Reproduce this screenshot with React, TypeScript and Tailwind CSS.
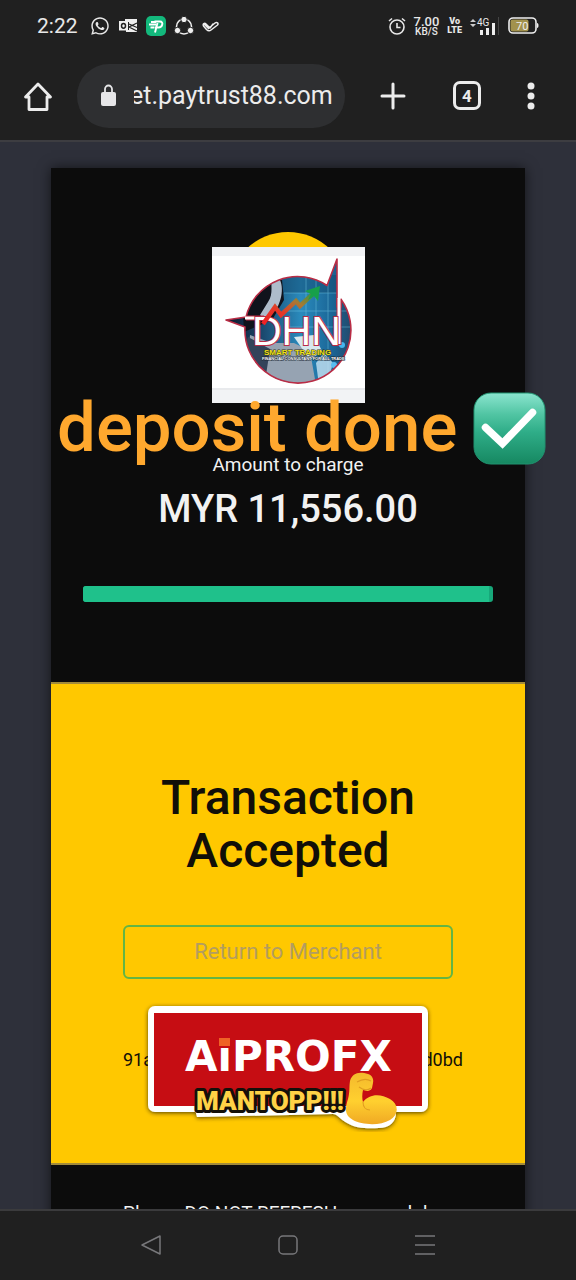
import React from "react";
import { FaWhatsapp } from "react-icons/fa";

function StatusBar() {
  return (
    <div className="flex h-[51px] shrink-0 items-center justify-between pr-[37px] pl-[37px] text-[#e8e8e8]">
      <div className="flex items-center gap-2">
        <span className="mr-1 text-[21px] leading-6">2:22</span>
        <FaWhatsapp className="size-5" />
        <svg className="size-5" viewBox="0 0 20 20" aria-hidden="true">
          <path d="M7 3h12v13H8v-2h3V6H7z" fill="#eee" />
          <path d="M11 8l8 3.500M19 7l-8 4 8 4" stroke="#202020" strokeWidth="1.200" fill="none" />
          <rect x="1" y="5" width="9" height="9.500" fill="#eee" />
          <ellipse cx="5.500" cy="9.800" rx="2" ry="2.400" fill="none" stroke="#202020" strokeWidth="1.500" />
        </svg>
        <svg className="size-5" viewBox="0 0 20 20" aria-hidden="true">
          <rect width="20" height="20" rx="5" fill="#13b87c" />
          <path d="M9 16.500L11.500 7M8.500 5.500H14c4 0 2.500 6-1.500 6H9M3 8.500h7M4.500 11.500h4M5 6h5" stroke="#fff" strokeWidth="1.900" fill="none" />
        </svg>
        <svg className="size-5" viewBox="0 0 20 20" aria-hidden="true">
          <circle cx="10" cy="10.500" r="7.500" fill="none" stroke="#eee" strokeWidth="1.600" />
          <g fill="#eee" stroke="#202020" strokeWidth="1">
            <circle cx="10" cy="3.500" r="3.200" />
            <circle cx="3.500" cy="14.500" r="3.200" />
            <circle cx="16.500" cy="14.500" r="3.200" />
          </g>
        </svg>
        <svg className="h-5 w-[18px]" viewBox="0 0 18 20" aria-hidden="true">
          <path d="M2.500 8.500l4 4L13 7c2-1.500 4 .5 2.500 2L9 14c-1.500 1.200-3 1-4.500-.5L1.500 10c-1-2 1-3.500 2.500-2l4 4 3-4" fill="none" stroke="#eee" strokeWidth="1.500" strokeLinecap="round" strokeLinejoin="round" />
        </svg>
      </div>
      <div className="flex items-center gap-2">
        <svg className="size-[18px]" viewBox="0 0 18 18" fill="none" stroke="#e8e8e8" strokeWidth="1.600" aria-hidden="true">
          <circle cx="9" cy="10" r="7" />
          <path d="M9 6v4.500h3.500M1 4l3-2.500M17 4l-3-2.500" />
        </svg>
        <div className="flex flex-col items-center font-medium">
          <span className="text-[13px] leading-[11px]">7.00</span>
          <span className="text-[10px] leading-[9px]">KB/S</span>
        </div>
        <div className="flex flex-col items-center text-[9px] leading-[9px] font-black">
          <span>Vo</span>
          <span>LTE</span>
        </div>
        <svg className="h-5 w-[30px]" viewBox="0 0 30 20" aria-hidden="true">
          <path d="M0 6l3-3 3 3zM0 8l3 3 3-3z" fill="#ccc" />
          <text x="7" y="10" fontSize="10" fill="#e8e8e8">4G</text>
          <path d="M10 14h3v5h-3zM16 12h3v7h-3zM22 7h3v12h-3z" fill="#eee" />
          <path d="M28.500 1v18" stroke="#444" />
        </svg>
        <svg className="h-5 w-[31px]" viewBox="0 0 31 20" aria-hidden="true">
          <rect x="1" y="2" width="27" height="15" rx="4" fill="#202020" stroke="#eee" strokeWidth="1.600" />
          <rect x="2.500" y="3.500" width="18" height="12" rx="2" fill="#a2924d" />
          <path d="M29 7c2 0 2 5 0 5z" fill="#eee" />
          <text x="8" y="13.500" fontSize="11" fill="#eee">70</text>
        </svg>
      </div>
    </div>
  );
}

function BrowserBar() {
  return (
    <header className="flex h-[91px] shrink-0 items-center border-b-2 border-[#3d3d41] pr-[29px] pl-[22px] text-[#ececec]">
      <button aria-label="Home" className="size-8">
        <svg className="size-8" viewBox="0 0 32 32" fill="none" stroke="#ececec" strokeWidth="2.800" strokeLinejoin="round" aria-hidden="true">
          <path d="M3.500 17L16 4l12.500 13H25v12.500H7V17z" />
        </svg>
      </button>
      <div className="ml-[23px] flex h-16 min-w-0 flex-1 items-center rounded-full bg-[#2e2f31] pr-2 pl-[23px]">
        <svg className="h-[23px] w-[17px] shrink-0" viewBox="0 0 17 23" aria-hidden="true">
          <rect x="1" y="8" width="15" height="14" rx="2" fill="#e6e6e8" />
          <path d="M5 9V5a3.500 3.500 0 017 0v4" stroke="#e6e6e8" strokeWidth="1.800" fill="none" />
        </svg>
        <input aria-label="Web address" readOnly value="et.paytrust88.com" className="ml-[17px] w-full min-w-0 bg-transparent -indent-[4px] text-[25px] leading-8 outline-none" />
      </div>
      <button aria-label="New tab" className="ml-8 size-8">
        <svg className="size-8" viewBox="0 0 32 32" stroke="#ececec" strokeWidth="3" strokeLinecap="round" aria-hidden="true">
          <path d="M16 4v24M5 16h22" />
        </svg>
      </button>
      <button aria-label="4 open tabs" className="ml-11 flex h-[29px] w-7 items-center justify-center rounded-[7px] border-3 border-[#ececec] text-[17px] leading-5 font-bold">
        4
      </button>
      <button aria-label="More options" className="ml-[34px] size-8">
        <svg className="size-8" viewBox="0 0 32 32" fill="#ececec" aria-hidden="true">
          <circle cx="16" cy="6" r="3.500" />
          <circle cx="16" cy="16" r="3.500" />
          <circle cx="16" cy="26" r="3.500" />
        </svg>
      </button>
    </header>
  );
}

const emblemOutline = "M125 12L115 38.500A53 53 0 0 0 34 70L14 73L33 80A53 53 0 1 0 129 52.200V60H125Z";

function DhnLogo() {
  return (
    <svg className="h-[156px] w-[153px]" viewBox="0 0 153 156" role="img" aria-label="DHN Smart Trading">
      <defs>
        <linearGradient id="globe" x1="0" y1="0" x2="1" y2="0">
          <stop offset="0" stopColor="#0d1627" />
          <stop offset=".3" stopColor="#1a4a70" />
          <stop offset=".6" stopColor="#2a8bbd" />
          <stop offset=".85" stopColor="#1a6596" />
          <stop offset="1" stopColor="#234a6c" />
        </linearGradient>
        <linearGradient id="trend" x1="0" y1="1" x2="1" y2="0">
          <stop offset="0" stopColor="#ef2025" />
          <stop offset=".35" stopColor="#e53827" />
          <stop offset=".65" stopColor="#a87932" />
          <stop offset="1" stopColor="#17a04a" />
        </linearGradient>
        <clipPath id="emblem">
          <path d={emblemOutline} />
        </clipPath>
      </defs>
      <rect width="153" height="156" fill="#f2f3f5" />
      <rect y="9" width="153" height="132" fill="#fff" />
      <path d="M0 142h153" stroke="#dfe1e4" />
      <path d={emblemOutline} fill="url(#globe)" />
      <g clipPath="url(#emblem)">
        <path d="M70 28h70v18H70z" fill="#12496f" opacity=".5" />
        <path d="M30 50l32-24 8 7 2 20-12 20-28 12z" fill="#10131c" />
        <path d="M60 27c12 2 12 20 6 32l-12 14-6-5 8-13c6-9 2-17 4-28z" fill="#aebccb" />
        <path d="M72 46h68M76 64h65M72 80h66M104 30v75M116 30v95M94 30v70" stroke="#7bd0ea" strokeWidth=".7" opacity=".6" />
        <path d="M38 88l22 8 22 0 16 8 6 34H62L36 116z" fill="#96a3b2" />
        <path d="M36 90l22 12-4 26-24-18z" fill="#33435a" />
        <path d="M82 90l20-2 8 16-12 9z" fill="#d6e8ee" />
        <path d="M104 116l8-10 9 10-6 22h-8z" fill="#c7e4f4" opacity=".8" />
        <circle cx="130" cy="98" r="3" fill="#45b4ed" />
        <circle cx="122" cy="118" r="3" fill="#58bdf0" />
      </g>
      <path d={emblemOutline} fill="none" stroke="#b92c45" strokeWidth="1.600" strokeLinejoin="round" />
      <path d="M34 71h18M127 52v46" stroke="#b92c45" strokeWidth="5" />
      <path d="M33 71h20M127 51v46" stroke="#fff" strokeWidth="3" />
      <text x="40" y="98" fontFamily="Liberation Sans" fontSize="41" fill="#fff" stroke="#b92c45" strokeWidth="2" paintOrder="stroke">DHN</text>
      <path d="M51 77l12-17 6 8 15-14 4 5 16-15" fill="none" stroke="url(#trend)" strokeWidth="4.500" />
      <path d="M93 44l15-5-2 15-4-5-6 4 3-6z" fill="#17a04a" />
      <text x="52" y="108" fontFamily="Liberation Sans" fontWeight="700" fontSize="8" fill="#f0e31c" stroke="#343219" strokeWidth="1" paintOrder="stroke">SMART TRADING</text>
      <text x="50" y="113" fontFamily="Liberation Sans" fontWeight="700" fontSize="4" fill="#fff" stroke="#202936" strokeWidth="1" paintOrder="stroke">FINANCIAL CONSULTANT FOR ALL TRADE</text>
    </svg>
  );
}

function CheckMark() {
  return (
    <svg className="h-[73px] w-[73px] shrink-0" viewBox="0 0 73 73" role="img" aria-label="Done">
      <defs>
        <linearGradient id="tile" x1="0" y1="0" x2="0" y2="1">
          <stop offset="0" stopColor="#8be5cf" />
          <stop offset=".3" stopColor="#51c5a3" />
          <stop offset=".55" stopColor="#2fad88" />
          <stop offset="1" stopColor="#168861" />
        </linearGradient>
      </defs>
      <rect x="1" y="1" width="71" height="71" rx="17" fill="url(#tile)" stroke="#209370" />
      <path d="M12.500 35.500l17 16 30-31" fill="none" stroke="#fff" strokeWidth="7.500" strokeLinecap="round" strokeLinejoin="miter" />
    </svg>
  );
}

function Sticker() {
  return (
    <svg className="h-[130px] w-[290px]" viewBox="0 0 290 130" role="img" aria-label="AiPROFX sticker">
      <defs>
        <filter id="shade" x="-10%" y="-10%" width="120%" height="125%">
          <feDropShadow dx="0" dy="1" stdDeviation="2" floodColor="#2a2200" floodOpacity=".8" />
        </filter>
        <linearGradient id="skin" x1="0" y1="0" x2="0" y2="1">
          <stop offset="0" stopColor="#f4b92d" />
          <stop offset=".55" stopColor="#ffd02f" />
          <stop offset="1" stopColor="#f0a924" />
        </linearGradient>
      </defs>
      <g filter="url(#shade)">
        <rect x="5" y="4" width="280" height="106" rx="7" fill="#fff" />
        <path d="M48 92h152l5-17 14-1 8 7v15l20 5 6 10c0 9-7 15-17 15-12 1-24 0-32-5-7-4-10-9-14-9L54 115z" fill="#fff" />
      </g>
      <rect x="11" y="11" width="268" height="93" fill="#c60d13" />
      <text x="42" y="69" fontFamily="DejaVu Sans" fontWeight="700" fontSize="42" fill="#fff">
        AiPROFX
      </text>
      <path d="M76 36h11v8H76z" fill="#ef6225" />
      <text x="53" y="108" fontFamily="Roboto" fontWeight="900" fontSize="26" fill="#ffd246" stroke="#14100a" strokeWidth="6" strokeLinejoin="round" paintOrder="stroke">
        MANTOPP!!!
      </text>
      <path d="M207 79c2-8 9-10 18-7 4 1 6 5 5 9l-1 5c-2 4-6 3-9 2-1 4-1 9 0 12 6-8 17-9 27-3 9 5 9 16 0 21-10 6-28 5-37 0-9-5-8-12-5-21 2-7 1-12 2-18z" fill="url(#skin)" />
      <path d="M214 80c5-3 9-4 14-1M216 85c4 3 8 4 12 1M220 100c0 5 3 8 7 8" fill="none" stroke="#e09d20" strokeWidth="1.100" />
    </svg>
  );
}

function PaymentCard() {
  return (
    <article className="bg-[#0c0c0c] shadow-[0_0_12px_rgba(0,0,0,0.6)]">
      <section className="relative flex h-[514px] flex-col items-center px-8 pt-16 text-[#f2f2f2]">
        <div className="relative flex h-[218px] shrink-0 justify-center">
          <div className="size-[120px] rounded-full bg-[#ffc800]" />
          <div className="absolute top-[15px]">
            <DhnLogo />
          </div>
        </div>
        <p className="text-[19px] leading-[30px]">Amount to charge</p>
        <p className="mt-2 text-[38px] leading-[42px] font-medium">MYR 11,556.00</p>
        <div role="progressbar" aria-label="Payment progress" aria-valuenow={99} className="mt-[56px] h-4 w-full overflow-hidden rounded-[3px] bg-[#17a87a]">
          <div className="h-full w-[99%] bg-[#1fc18b]" />
        </div>
        <div className="absolute top-[220px] left-[6px] flex items-center gap-4 whitespace-nowrap">
          <span className="text-[69px] leading-[80px] font-medium text-[#ffa82e]">deposit done</span>
          <CheckMark />
        </div>
      </section>
      <section className="relative flex h-[483px] flex-col items-center border-y-2 border-[#a28b3b] bg-[#ffc800] px-[72px] pt-[87px] text-[#110f08]">
        <h1 className="text-center text-[48px] leading-[53px] font-medium">
          Transaction
          <br />
          Accepted
        </h1>
        <button className="mt-[48px] h-[54px] w-full shrink-0 rounded-[6px] border-2 border-[#63b545] text-[22px] leading-7 text-[#b39d60]">Return to Merchant</button>
        <p className="mt-[69px] flex w-[340px] justify-between self-start text-[18px] leading-6">
          <span>91a</span>
          <span>d0bd</span>
        </p>
        <div className="absolute top-[318px] left-[92px]">
          <Sticker />
        </div>
      </section>
      <p className="h-[120px] px-[72px] pt-[34px] text-[19px] leading-7 whitespace-nowrap text-[#f2f2f2]">Please DO NOT REFRESH your web browser</p>
    </article>
  );
}

function NavigationBar() {
  return (
    <nav className="flex h-[71px] shrink-0 items-center justify-center gap-[113px] border-t-2 border-[#3b3b3d]">
      <button aria-label="Back" className="size-6">
        <svg viewBox="0 0 24 24" fill="none" stroke="#77777a" strokeWidth="1.500" strokeLinejoin="round" aria-hidden="true">
          <path d="M3 11L21 2v18z" />
        </svg>
      </button>
      <button aria-label="Home screen" className="size-6">
        <svg viewBox="0 0 24 24" fill="none" stroke="#77777a" strokeWidth="1.500" aria-hidden="true">
          <rect x="3" y="2" width="18" height="18" rx="4" />
        </svg>
      </button>
      <button aria-label="Recent apps" className="size-6">
        <svg viewBox="0 0 24 24" stroke="#77777a" strokeWidth="1.700" aria-hidden="true">
          <path d="M2 2h20M2 11h20M2 20h20" />
        </svg>
      </button>
    </nav>
  );
}

export default function App() {
  return (
    <div className="flex h-screen flex-col overflow-hidden bg-[#202020] font-['Roboto',sans-serif]">
      <StatusBar />
      <BrowserBar />
      <main className="min-h-0 flex-1 overflow-hidden bg-[#2e303a] px-[51px] pt-[26px]">
        <PaymentCard />
      </main>
      <NavigationBar />
    </div>
  );
}
